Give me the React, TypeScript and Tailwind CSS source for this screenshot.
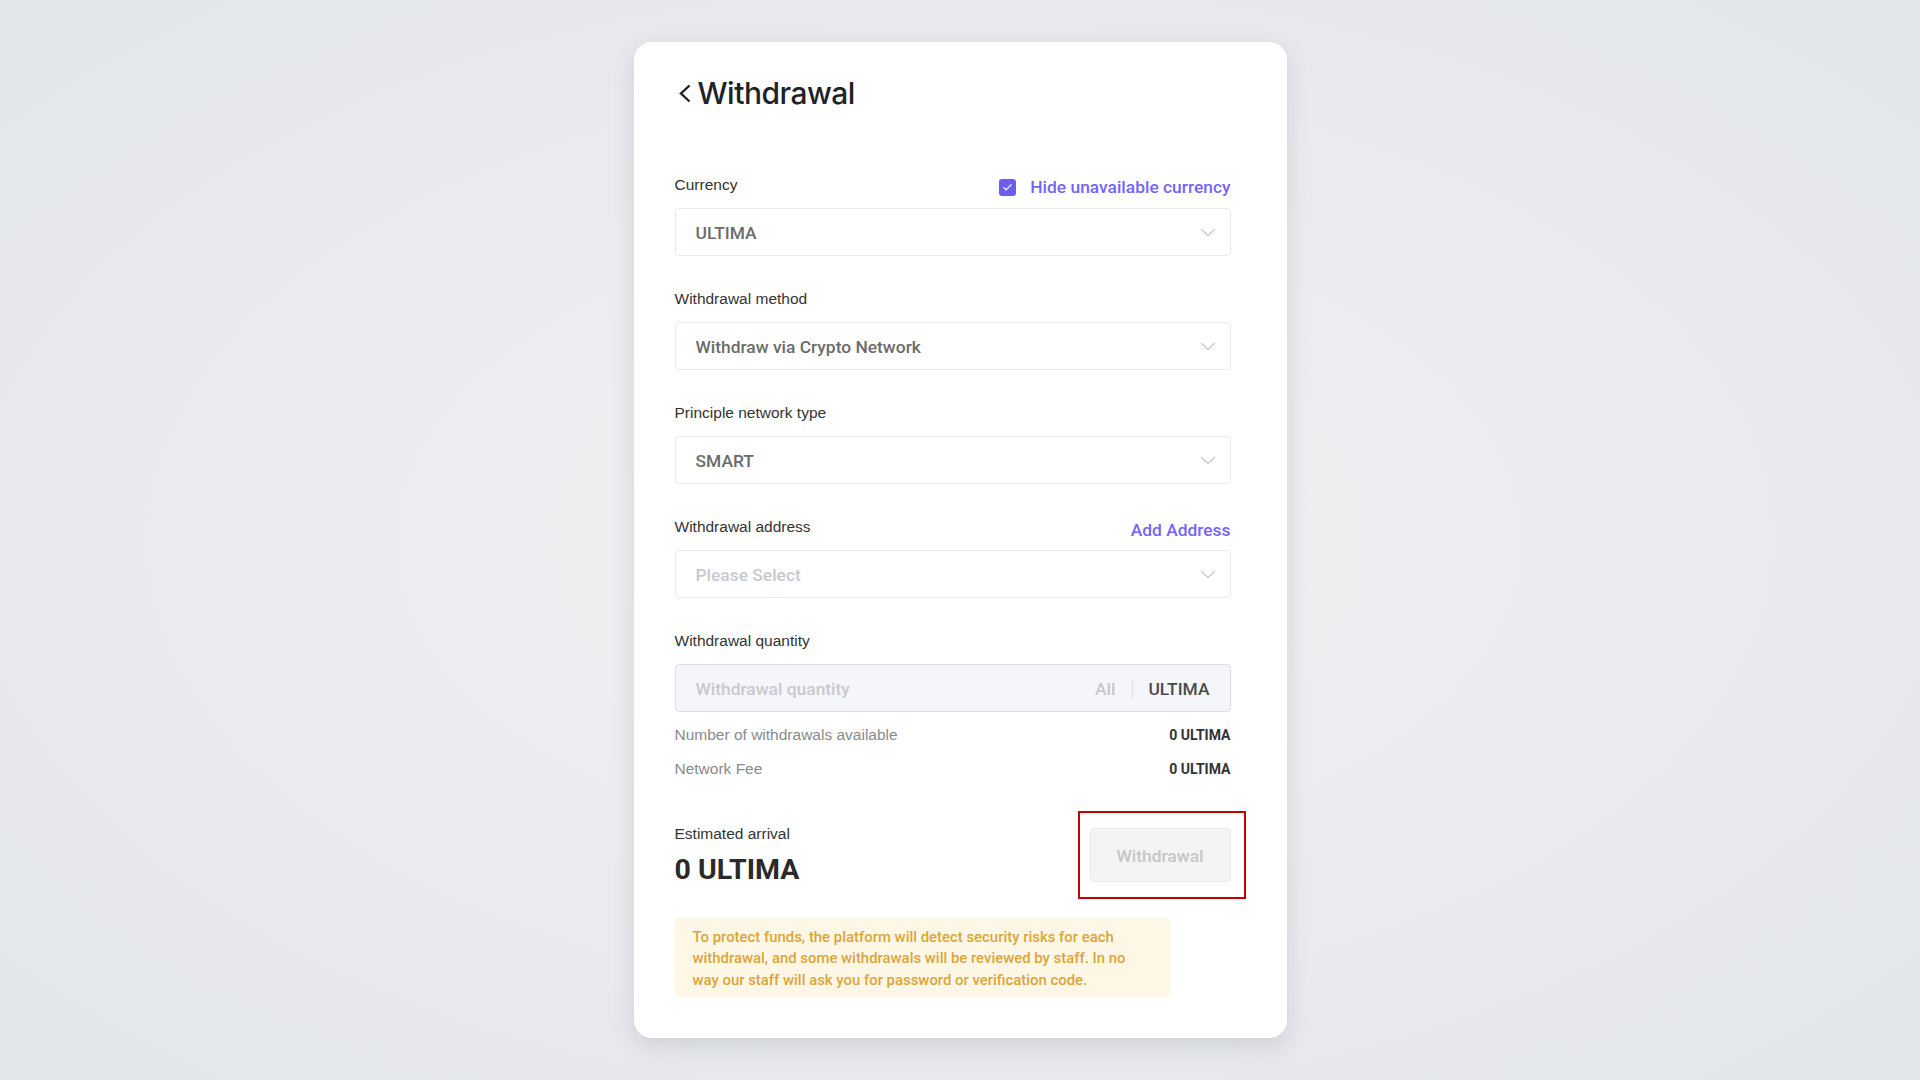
import { Check } from 'lucide-react';

const label = "font-['Liberation_Sans',Arial,sans-serif] text-[15.5px] leading-5 text-[#333]";
const value = "font-['Roboto',sans-serif] font-medium text-[17.4px]";

function ChevronDown() {
  return (
    <svg width="16" height="9" viewBox="0 0 16 9" fill="none" className="shrink-0">
      <path d="M1 1l7 6.5L15 1" stroke="#c4c5cb" strokeWidth="1.2" />
    </svg>
  );
}

function Select({ text, placeholder }: { text: string; placeholder?: boolean }) {
  return (
    <div className="flex h-12 items-center justify-between rounded-[4px] border border-[#ebebef] bg-white pl-5 pr-[14px]">
      <span className={`${value} pt-[3px] ${placeholder ? 'text-[#c8c9cf]' : 'text-[#6b6b6b]'}`}>{text}</span>
      <ChevronDown />
    </div>
  );
}

function Field({
  title,
  extra,
  children,
}: {
  title: string;
  extra?: React.ReactNode;
  children: React.ReactNode;
}) {
  return (
    <div>
      <div className="flex h-5 items-center justify-between">
        <span className={label}>{title}</span>
        {extra}
      </div>
      <div className="mt-[13px]">{children}</div>
    </div>
  );
}

export default function App() {
  return (
    <div className="flex min-h-screen items-center justify-center bg-[radial-gradient(ellipse_at_center,#eef0f2_0%,#e9ebee_55%,#e2e5e9_100%)]">
      <div className="w-[653px] rounded-[18px] bg-white pb-[41px] pl-[41px] pr-[56px] pt-[33px] shadow-[0_8px_22px_rgba(40,50,70,0.13)]">
        {/* Header */}
        <div className="flex h-9 items-center">
          <svg width="14" height="19" viewBox="0 0 14 19" fill="none" className="ml-[3px]">
            <path d="M11.5 1.5L3 9.5l8.5 8" stroke="#1f2329" strokeWidth="2.4" />
          </svg>
          <h1 className="ml-[6px] font-['Inter',sans-serif] text-[30px] font-medium leading-9 tracking-[-0.5px] text-[#1f2329]">
            Withdrawal
          </h1>
        </div>

        <div className="mt-16 flex w-[556px] flex-col gap-[33px]">
          <Field
            title="Currency"
            extra={
              <label className="mt-[4px] flex items-center gap-[14px]">
                <span className="flex h-[17px] w-[17px] items-center justify-center rounded-[3px] bg-[#6c5cf0]">
                  <Check size={11} strokeWidth={2.5} className="text-white" />
                </span>
                <span className={`${value} text-[#7565f5]`}>Hide unavailable currency</span>
              </label>
            }
          >
            <Select text="ULTIMA" />
          </Field>

          <Field title="Withdrawal method">
            <Select text="Withdraw via Crypto Network" />
          </Field>

          <Field title="Principle network type">
            <Select text="SMART" />
          </Field>

          <Field
            title="Withdrawal address"
            extra={<span className={`${value} mt-[5px] text-[#7565f5]`}>Add Address</span>}
          >
            <Select text="Please Select" placeholder />
          </Field>

          <Field title="Withdrawal quantity">
            <div className="flex h-12 items-center rounded-[4px] border border-[#dcdde3] bg-[#f5f6fa] pl-5 pr-5 pt-[2px]">
              <span className={`${value} flex-1 text-[#c8c9cf]`}>Withdrawal quantity</span>
              <span className={`${value} text-[#c6c7cc]`}>All</span>
              <span className="ml-[17px] mr-[15px] h-5 w-px bg-[#dedfe4]" />
              <span className={`${value} text-[#4a4a4a]`}>ULTIMA</span>
            </div>
          </Field>
        </div>

        {/* Summary */}
        <div className="mt-[13px] flex w-[556px] flex-col gap-[14px]">
          <div className="flex h-5 items-center justify-between">
            <span className={`${label} !text-[#8a8a8a]`}>Number of withdrawals available</span>
            <span className="font-['Roboto',sans-serif] text-[14px] font-bold text-[#333]">0 ULTIMA</span>
          </div>
          <div className="flex h-5 items-center justify-between">
            <span className={`${label} !text-[#8a8a8a]`}>Network Fee</span>
            <span className="font-['Roboto',sans-serif] text-[14px] font-bold text-[#333]">0 ULTIMA</span>
          </div>
        </div>

        <div className="mt-[45px] flex w-[556px] items-start justify-between">
          <div>
            <div className={label}>Estimated arrival</div>
            <div className="mt-[9px] font-['Roboto',sans-serif] text-[28.5px] font-bold leading-[34px] text-[#2a2a2a]">
              0 ULTIMA
            </div>
          </div>
          <div className="relative mt-1">
            <button className="h-[54px] w-[141px] rounded-[4px] border border-[#ebebeb] bg-[#f4f4f4] pt-[3px] font-['Roboto',sans-serif] text-[17.4px] font-medium text-[#c6c6c6]">
              Withdrawal
            </button>
            <div className="pointer-events-none absolute -bottom-[17px] -left-[12px] -right-[15px] -top-[17px] border-2 border-[#c40000]" />
          </div>
        </div>

        <div className="mt-[31px] w-[495px] rounded-[4px] bg-[#fef7e6] pb-[6px] pl-[18px] pr-[18px] pt-[9px] font-['Roboto',sans-serif] text-[14.9px] font-medium leading-[21.3px] text-[#dca53c]">
          To protect funds, the platform will detect security risks for each withdrawal, and some
          withdrawals will be reviewed by staff. In no way our staff will ask you for password or
          verification code.
        </div>
      </div>
    </div>
  );
}
